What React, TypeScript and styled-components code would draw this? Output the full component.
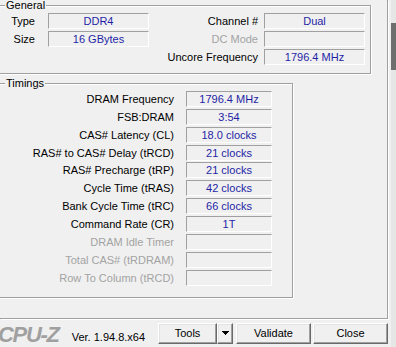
import { Fragment } from 'react'
import styled, { createGlobalStyle } from 'styled-components'

const GlobalStyle = createGlobalStyle`
  html, body {
    margin: 0;
    padding: 0;
    background: #f0f0f0;
  }
  body {
    font-family: "Liberation Sans", Arial, sans-serif;
    font-size: 11px;
    color: #000;
  }
`

const Window = styled.div`
  width: 396px;
  height: 347px;
  overflow: hidden;
  display: flex;
  background: #f0f0f0;
`

const Main = styled.div`
  width: 389px;
  display: flex;
  flex-direction: column;
`

const TabPage = styled.div`
  box-sizing: border-box;
  width: 388px;
  height: 319px;
  border-right: 1px solid #a0a0a0;
  border-bottom: 1px solid #a0a0a0;
  box-shadow: 1px 1px 0 #fff;
`

const Group = styled.fieldset<{ $width: number; $top: number; $bottom: number }>`
  box-sizing: border-box;
  width: ${(p) => p.$width}px;
  margin: ${(p) => p.$top}px 0 0 -4px;
  padding: 2px 0 ${(p) => p.$bottom}px 3px;
  border: 1px solid #a0a0a0;
  box-shadow: 1px 1px 0 #fff, inset 1px 1px 0 #fff;
  min-inline-size: 0;

  legend {
    margin-left: 5px;
    padding: 0 1px;
    line-height: 12px;
    background: #f0f0f0;
  }
`

const GeneralGrid = styled.div`
  display: grid;
  grid-template-columns: 48px 101px 115px 101px;
  grid-auto-rows: 16px;
  row-gap: 2px;
`

const TimingsGrid = styled.div`
  display: grid;
  grid-template-columns: 186px 86px;
  grid-auto-rows: 16px;
  row-gap: 2px;
`

const Label = styled.div<{ $pad: number; $off?: boolean; $col?: number; $lift?: boolean }>`
  grid-column: ${(p) => p.$col ?? 'auto'};
  padding-right: ${(p) => p.$pad}px;
  text-align: right;
  white-space: nowrap;
  line-height: 16px;
  color: ${(p) => (p.$off ? '#a3a3a3' : '#000')};
  margin-top: ${(p) => (p.$lift ? '-1px' : '0')};
`

const Field = styled.div<{ $lift?: boolean }>`
  box-sizing: border-box;
  height: 16px;
  border: 1px solid;
  border-color: #a0a0a0 #fff #fff #a0a0a0;
  color: #1f1fa6;
  text-align: center;
  line-height: 14px;
  white-space: nowrap;
  margin-top: ${(p) => (p.$lift ? '-1px' : '0')};
`

const Footer = styled.div`
  display: flex;
  align-items: flex-start;
  padding: 4px 1px 0 0;
`

const Logo = styled.div`
  margin: 1px 0 0 -2px;
  font-size: 22px;
  line-height: 22px;
  font-weight: bold;
  font-style: italic;
  letter-spacing: -1.3px;
  color: #a0a0a0;
`

const Version = styled.div`
  margin: 8px 0 0 13px;
  line-height: 13px;
`

const Buttons = styled.div`
  margin-left: auto;
  display: flex;
`

const Button = styled.button<{ $width: number; $gap?: number }>`
  box-sizing: border-box;
  width: ${(p) => p.$width}px;
  height: 21px;
  margin: 0 0 0 ${(p) => p.$gap ?? 0}px;
  padding: 0 0 1px;
  font: inherit;
  color: #000;
  background: #f0f0f0;
  border: 1px solid;
  border-color: #fff #696969 #696969 #fff;
  box-shadow: inset -1px -1px 0 #a0a0a0, inset 1px 1px 0 #e3e3e3;
  display: flex;
  align-items: center;
  justify-content: center;
`

const Side = styled.div`
  flex: 1;
  display: flex;
  flex-direction: column;
  padding-left: 2px;
`

const SideTrack = styled.div<{ $h: number; $dark?: boolean }>`
  height: ${(p) => p.$h}px;
  background: ${(p) => (p.$dark ? '#6e6e6e' : '#e6e6e6')};
`

const timings: [string, string, boolean?][] = [
  ['DRAM Frequency', '1796.4 MHz'],
  ['FSB:DRAM', '3:54'],
  ['CAS# Latency (CL)', '18.0 clocks'],
  ['RAS# to CAS# Delay (tRCD)', '21 clocks'],
  ['RAS# Precharge (tRP)', '21 clocks'],
  ['Cycle Time (tRAS)', '42 clocks'],
  ['Bank Cycle Time (tRC)', '66 clocks'],
  ['Command Rate (CR)', '1T'],
  ['DRAM Idle Timer', '', true],
  ['Total CAS# (tRDRAM)', '', true],
  ['Row To Column (tRCD)', '', true],
]

const App = () => {
  return (
    <>
      <GlobalStyle />
      <Window>
        <Main>
          <TabPage>
            <Group $width={375} $top={-1} $bottom={8}>
              <legend>General</legend>
              <GeneralGrid>
                <Label $pad={13}>Type</Label>
                <Field>DDR4</Field>
                <Label $pad={6}>Channel #</Label>
                <Field>Dual</Field>
                <Label $pad={13}>Size</Label>
                <Field>16 GBytes</Field>
                <Label $pad={6} $off>
                  DC Mode
                </Label>
                <Field />
                <Label $pad={6} $col={3}>
                  Uncore Frequency
                </Label>
                <Field>1796.4 MHz</Field>
              </GeneralGrid>
            </Group>
            <Group $width={297} $top={3} $bottom={10}>
              <legend>Timings</legend>
              <TimingsGrid>
                {timings.map(([name, value, off], i) => (
                  <Fragment key={name}>
                    <Label $pad={12} $off={off} $lift={i >= 4}>
                      {name}
                    </Label>
                    <Field $lift={i >= 4}>{value}</Field>
                  </Fragment>
                ))}
              </TimingsGrid>
            </Group>
          </TabPage>
          <Footer>
            <Logo>CPU-Z</Logo>
            <Version>Ver. 1.94.8.x64</Version>
            <Buttons>
              <Button $width={59}>Tools</Button>
              <Button $width={16}>
                <svg width="7" height="4" viewBox="0 0 7 4" shapeRendering="crispEdges">
                  <polygon points="0,0 7,0 3.5,4" fill="#000" />
                </svg>
              </Button>
              <Button $width={75} $gap={3}>
                Validate
              </Button>
              <Button $width={75} $gap={2}>
                Close
              </Button>
            </Buttons>
          </Footer>
        </Main>
        <Side>
          <SideTrack $h={23} />
          <SideTrack $h={47} $dark />
          <SideTrack $h={277} />
        </Side>
      </Window>
    </>
  )
}

export default App
